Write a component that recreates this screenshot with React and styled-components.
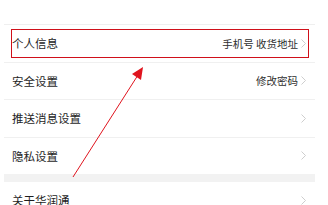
import React from 'react';
import styled, { createGlobalStyle } from 'styled-components';

const Global = createGlobalStyle`
  html, body {
    margin: 0;
    padding: 0;
    background: #fff;
    font-family: "Noto Sans CJK SC", "Noto Sans", sans-serif;
    overflow: hidden;
  }
`;

const Page = styled.div`
  position: relative;
  width: 328px;
  height: 205px;
  overflow: hidden;
  background: #fff;
`;

const List = styled.div`
  margin: 24px 0 0 4px;
  width: 311px;
  border-top: 1px solid #efefef;
`;

const Row = styled.div`
  display: flex;
  align-items: center;
  justify-content: space-between;
  height: 36.5px;
  padding: 0 9px 0 8px;
  border-bottom: ${p => (p.$last ? 'none' : '1px solid #f0f0f0')};
`;

const Label = styled.span`
  font-size: 11.5px;
  color: #1e1e1e;
`;

const Right = styled.div`
  display: flex;
  align-items: center;
  gap: 3px;
`;

const Hint = styled.span`
  font-size: 10.5px;
  color: #2e2e2e;
`;

const Gap = styled.div`
  height: 8px;
  background: #f2f2f2;
`;

const Highlight = styled.div`
  position: absolute;
  left: 11px;
  top: 29px;
  width: 296px;
  height: 27px;
  border: 1px solid #d0101a;
`;

const Arrow = styled.svg`
  position: absolute;
  left: 0;
  top: 0;
  pointer-events: none;
`;

const Chevron = () => (
  <svg width="5" height="9" viewBox="0 0 5 9">
    <path d="M0.5 0.5 L4.5 4.5 L0.5 8.5" fill="none" stroke="#c8c8c8" strokeWidth="0.9" />
  </svg>
);

const rows = [
  { label: '个人信息', hint: '手机号 收货地址' },
  { label: '安全设置', hint: '修改密码' },
  { label: '推送消息设置' },
  { label: '隐私设置', last: true },
];

export default function App() {
  return (
    <Page>
      <Global />
      <List>
        {rows.map(r => (
          <Row key={r.label} $last={r.last}>
            <Label>{r.label}</Label>
            <Right>
              {r.hint && <Hint>{r.hint}</Hint>}
              <Chevron />
            </Right>
          </Row>
        ))}
        <Gap />
        <Row $last>
          <Label>关于华润通</Label>
          <Right>
            <Chevron />
          </Right>
        </Row>
      </List>
      <Highlight />
      <Arrow width="328" height="205" viewBox="0 0 328 205">
        <line x1="73" y1="177" x2="138" y2="75" stroke="#e0141e" strokeWidth="1" />
        <polygon points="143,67 141,80 132,74" fill="#e0141e" />
      </Arrow>
    </Page>
  );
}
